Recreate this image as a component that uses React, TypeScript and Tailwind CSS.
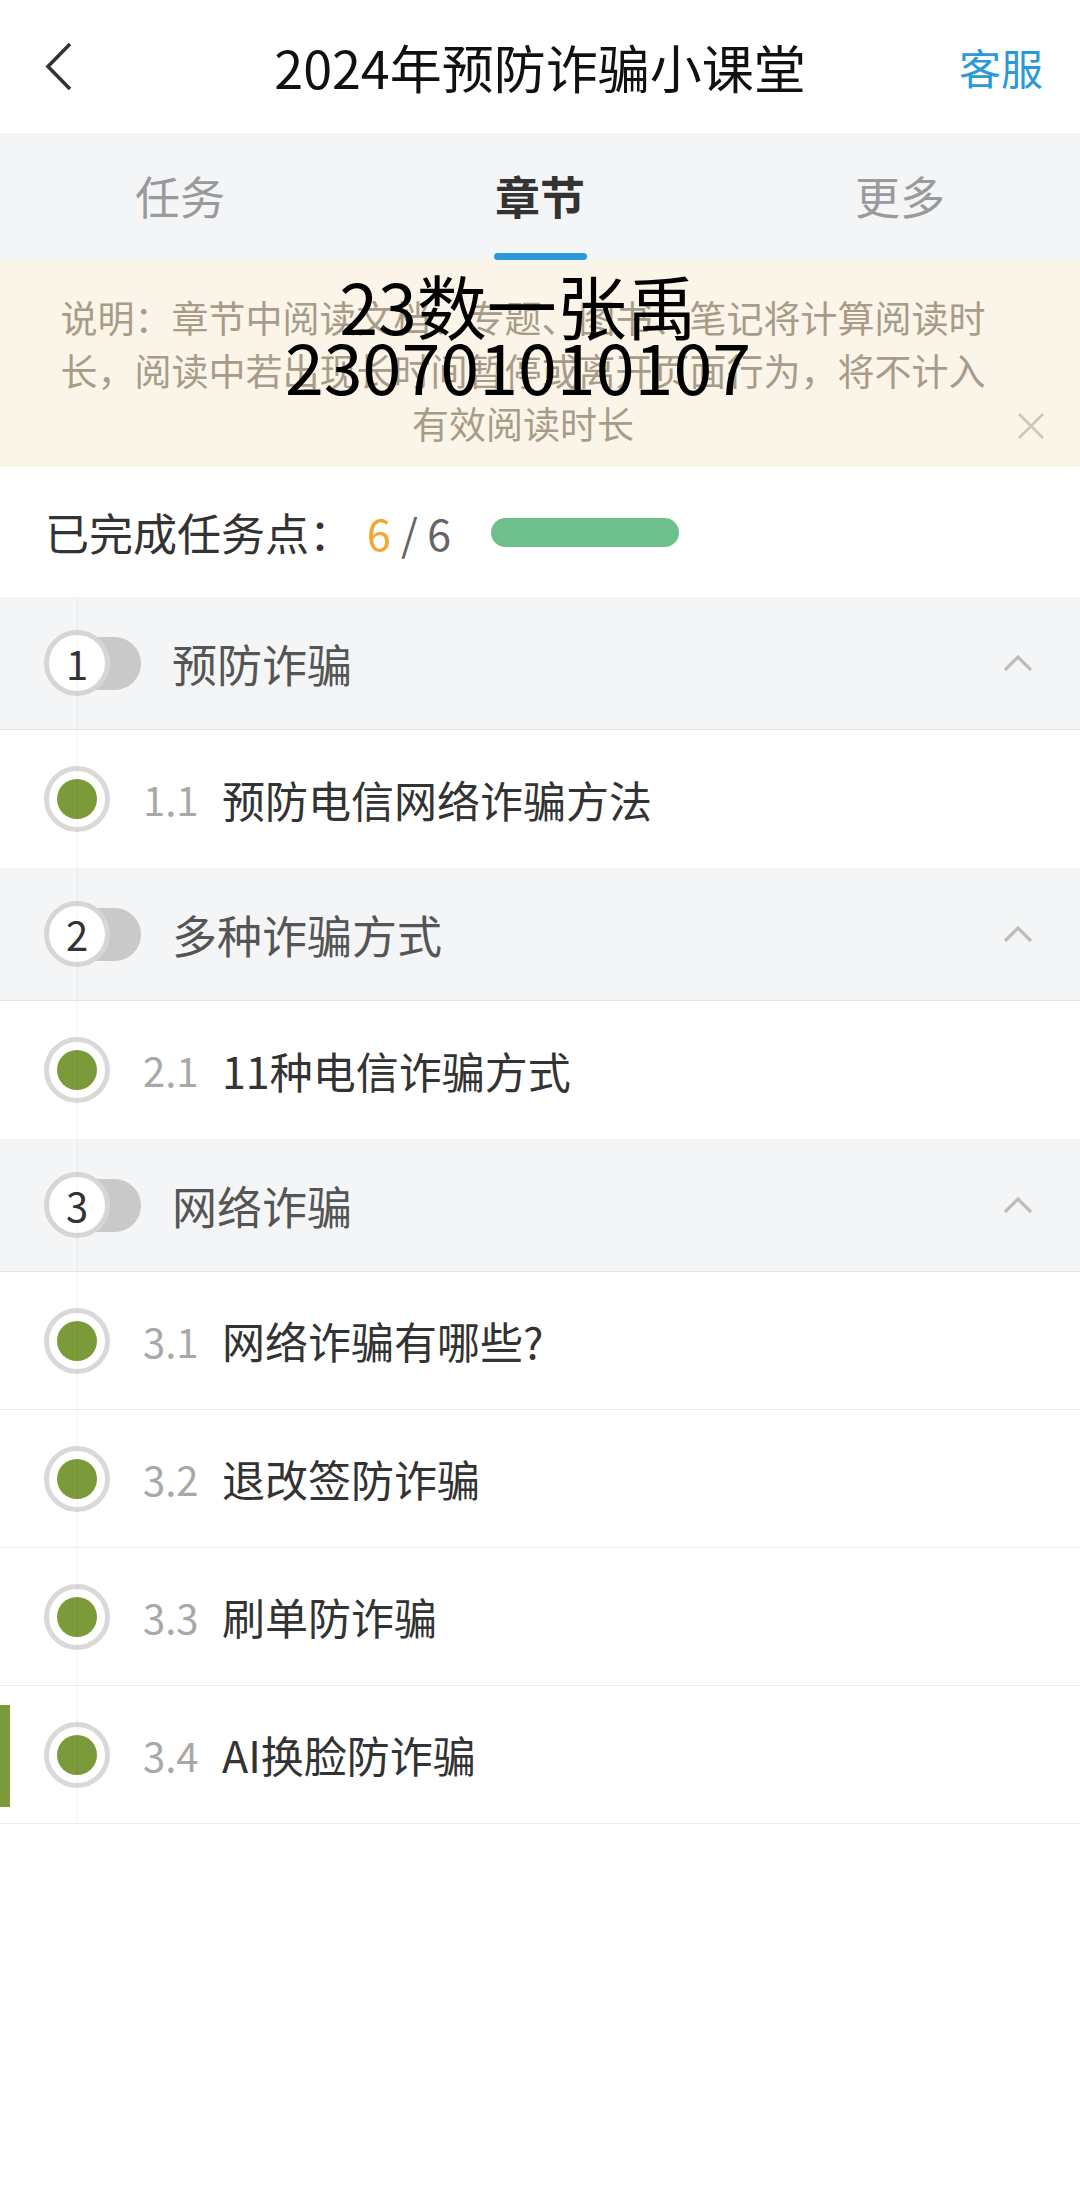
import React from "react";

const FONT = { fontFamily: '"Noto Sans CJK SC", "Noto Sans", sans-serif' };

type Item = { no: string; title: string; active?: boolean };
type Chapter = { no: string; title: string; items: Item[] };

const chapters: Chapter[] = [
  { no: "1", title: "预防诈骗", items: [{ no: "1.1", title: "预防电信网络诈骗方法" }] },
  { no: "2", title: "多种诈骗方式", items: [{ no: "2.1", title: "11种电信诈骗方式" }] },
  {
    no: "3",
    title: "网络诈骗",
    items: [
      { no: "3.1", title: "网络诈骗有哪些?" },
      { no: "3.2", title: "退改签防诈骗" },
      { no: "3.3", title: "刷单防诈骗" },
      { no: "3.4", title: "AI换脸防诈骗", active: true },
    ],
  },
];

function ChapterHeader({ c }: { c: Chapter }) {
  return (
    <div className="h-[133px] bg-[#f4f5f7] border-b border-[#e4e5e7] flex items-center pl-[44px] pr-[47px]">
      <div className="relative w-[97px] h-[66px] shrink-0">
        <div className="absolute left-[24px] right-0 top-[7px] h-[53px] rounded-full bg-[#c9c9c9]" />
        <div className="relative w-[66px] h-[66px] rounded-full border-[5px] border-[#d6d6d6] bg-white flex items-center justify-center">
          <span className="text-[40px] leading-none text-[#333]">{c.no}</span>
        </div>
      </div>
      <span className="ml-[31px] text-[45px] leading-none text-[#555]">{c.title}</span>
      <div className="ml-auto">
        <svg width="30" height="18" viewBox="0 0 30 18">
          <polyline points="2,16 15,3 28,16" fill="none" stroke="#bdbdbd" strokeWidth="3.2" />
        </svg>
      </div>
    </div>
  );
}

function ItemRow({ it, last }: { it: Item; last: boolean }) {
  return (
    <div
      className={
        "relative h-[138px] bg-white flex items-center pl-[44px] " +
        (last ? "" : "border-b border-[#ededed]")
      }
    >
      {it.active && <div className="absolute left-0 top-[19px] w-[10px] h-[102px] bg-[#7b9b3a]" />}
      <div className="w-[66px] h-[66px] rounded-full border-[5px] border-[#d9d9d9] bg-white flex items-center justify-center shrink-0">
        <div className="w-[40px] h-[40px] rounded-full bg-[#7b9b3a]" />
      </div>
      <span className="ml-[33px] w-[79px] text-[40px] leading-none text-[#a8a8a8]">{it.no}</span>
      <span className="text-[43px] leading-none text-[#333]">{it.title}</span>
    </div>
  );
}

export default function App() {
  return (
    <div className="w-[1080px] min-h-[2198px] bg-white relative" style={FONT}>
      {/* Header */}
      <div className="h-[133px] grid grid-cols-[1fr_auto_1fr] items-center bg-white">
        <div className="pl-[45px] flex items-center">
          <svg width="30" height="50" viewBox="0 0 30 50">
            <polyline points="25,2 3,24.5 25,47" fill="none" stroke="#333" strokeWidth="3.6" />
          </svg>
        </div>
        <div className="text-[52px] leading-none text-[#111]">2024年预防诈骗小课堂</div>
        <div className="flex justify-end pr-[37px]">
          <span className="text-[42px] leading-none text-[#2b99d6]">客服</span>
        </div>
      </div>

      {/* Tabs */}
      <div className="h-[127px] bg-[#f4f5f7] grid grid-cols-3">
        <div className="flex flex-col items-center pt-[40px]">
          <span className="text-[45px] leading-[46px] text-[#9a9a9a]">任务</span>
        </div>
        <div className="flex flex-col items-center pt-[40px]">
          <span className="text-[45px] leading-[46px] font-bold text-[#333]">章节</span>
          <div className="mt-auto w-[93px] h-[7px] rounded-full bg-[#2b9ad8]" />
        </div>
        <div className="flex flex-col items-center pt-[40px]">
          <span className="text-[45px] leading-[46px] text-[#9a9a9a]">更多</span>
        </div>
      </div>

      {/* Notice */}
      <div className="relative h-[207px] bg-[#fbf5e9]">
        <p className="pl-[58px] pr-[92px] pt-[31px] text-center text-[37px] leading-[53px] text-[#a89c88]">
          说明：章节中阅读文档、专题、图书、笔记将计算阅读时长，阅读中若出现长时间暂停或离开页面行为，将不计入有效阅读时长
        </p>
        <div className="absolute right-[35px] top-[152px]">
          <svg width="28" height="28" viewBox="0 0 28 28">
            <path d="M2 2 L26 26 M26 2 L2 26" stroke="#cdc6ba" strokeWidth="2.6" fill="none" />
          </svg>
        </div>
        {/* watermark */}
        <div className="absolute left-0 top-[15px] w-[1036px] text-center text-[70px] leading-[60px] text-black">
          <div>23数一张禹</div>
          <div>230701010107</div>
        </div>
      </div>

      {/* Progress */}
      <div className="h-[130px] flex items-center pl-[45px]">
        <span className="text-[44px] leading-none text-[#333]">已完成任务点：</span>
        <span className="ml-[14px] text-[43px] leading-none text-[#f3a632]">6</span>
        <span className="ml-[10px] text-[43px] leading-none text-[#666]">/ 6</span>
        <div className="ml-[40px] w-[188px] h-[29px] rounded-full bg-[#6dbf8b]" />
      </div>

      {/* Chapters */}
      <div className="relative">
        {chapters.map((c) => (
          <div key={c.no}>
            <ChapterHeader c={c} />
            {c.items.map((it, i) => (
              <ItemRow key={it.no} it={it} last={i === c.items.length - 1 && c.no !== "3"} />
            ))}
          </div>
        ))}
        <div className="absolute left-[77px] top-0 bottom-0 w-px bg-[#000]/[0.04] pointer-events-none" />
      </div>
    </div>
  );
}
